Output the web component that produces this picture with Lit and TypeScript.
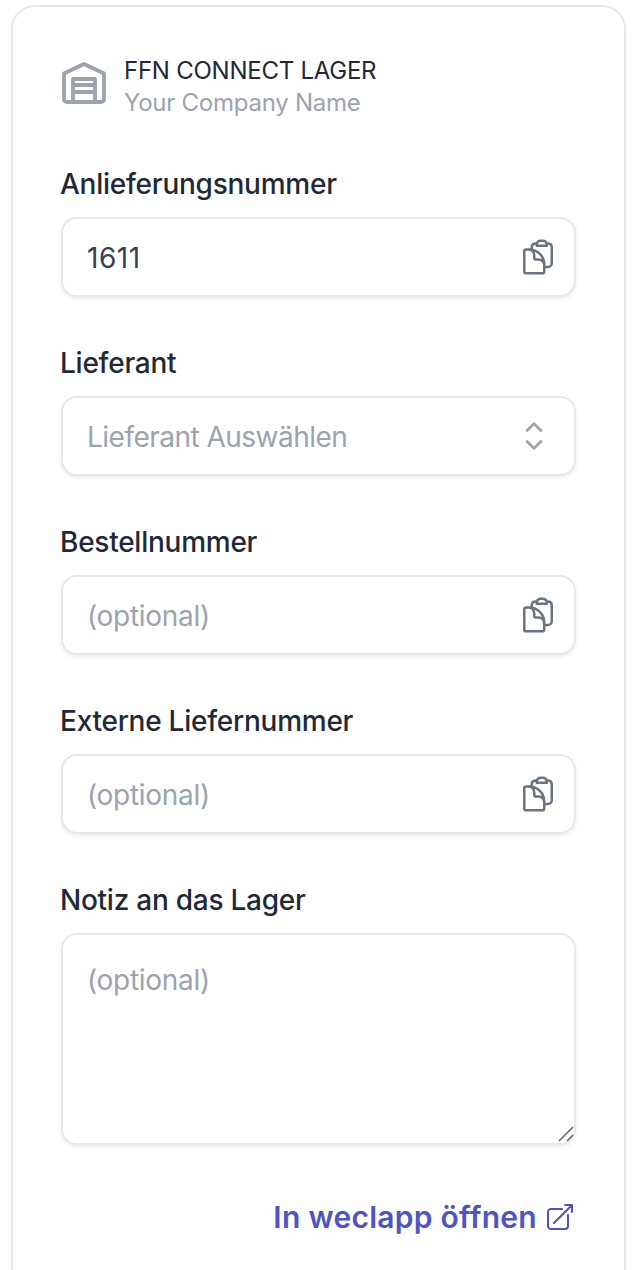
import { LitElement, html, css, svg } from "lit";
import { customElement } from "lit/decorators.js";

const clip = svg`<path d="M8.25 7.5V6.108c0-1.135.845-2.098 1.976-2.192.373-.03.748-.057 1.123-.08M15.75 18H18a2.25 2.25 0 002.25-2.25V6.108c0-1.135-.845-2.098-1.976-2.192a48.424 48.424 0 00-1.123-.08M15.75 18.75v-1.875a3.375 3.375 0 00-3.375-3.375h-1.5a1.125 1.125 0 01-1.125-1.125v-1.5A3.375 3.375 0 006.375 7.5H5.25m11.9-3.664A2.251 2.251 0 0015 2.25h-1.5a2.251 2.251 0 00-2.15 1.586m5.8 0c.065.21.1.433.1.664v.75h-6V4.5c0-.231.035-.454.1-.664M6.75 7.5H4.875c-.621 0-1.125.504-1.125 1.125v12c0 .621.504 1.125 1.125 1.125h9.75c.621 0 1.125-.504 1.125-1.125V16.5a9 9 0 00-9-9z"/>`;

@customElement("app-root")
export class AppRoot extends LitElement {
  static styles = css`
    :host { display: block; font-family: Inter, "Liberation Sans", sans-serif; height: 1270px; overflow: hidden; background: #fff; }
    * { box-sizing: border-box; }
    .page { padding: 5px 14px 0 11px; }
    .card { border: 2px solid #e5e7eb; border-radius: 24px; padding: 48px 48px 0; height: 1400px; background: #fff; box-shadow: 0 2px 4px rgba(0,0,0,.05); }
    .brand { display: flex; align-items: center; gap: 17px; height: 64px; }
    .brand svg { width: 46px; height: 46px; flex: none; color: #9ca3af; margin-top: -4px; }
    .brand-text { display: flex; flex-direction: column; font-size: 24px; line-height: 32px; letter-spacing: -.25px; }
    .title { color: #1f2937; }
    .sub { color: #9ca3af; }
    .form { display: flex; flex-direction: column; gap: 46px; margin-top: 45px; }
    .field { display: flex; flex-direction: column; gap: 13px; }
    label { display: block; font-size: 28px; line-height: 40px; font-weight: 500; color: #1f2937; height: 40px; margin-left: -1px; letter-spacing: -.25px; }
    .box { display: flex; align-items: center; height: 80px; padding: 2px 16px 0 24px; border: 2px solid #e5e7eb; border-radius: 16px; background: #fff; box-shadow: 0 2px 4px rgba(0,0,0,.08); }
    input { flex: 1; min-width: 0; border: 0; outline: 0; padding: 0; font: inherit; font-size: 28px; letter-spacing: .5px; color: #374151; background: transparent; }
    input::placeholder, textarea::placeholder { color: #9ca3af; opacity: 1; letter-spacing: -.3px; }
    .placeholder { flex: 1; font-size: 28px; letter-spacing: -.52px; color: #9ca3af; }
    .clip { width: 40px; height: 40px; color: #6b7280; flex: none; margin-top: -2px; }
    .updown { width: 44px; height: 44px; color: #9ca3af; flex: none; margin-right: 2px; margin-top: -2px; }
    .area { position: relative; }
    textarea { display: block; width: 100%; height: 212px; padding: 25px 24px; border: 2px solid #e5e7eb; border-radius: 16px; font: inherit; font-size: 28px; line-height: 40px; color: #374151; outline: 0; resize: none; box-shadow: 0 2px 4px rgba(0,0,0,.08); }
    .grip { position: absolute; right: 1px; bottom: 2px; width: 18px; height: 18px; stroke: #6b6b6b; stroke-width: 1.6; fill: none; }
    .foot { display: flex; justify-content: flex-end; margin-top: 50px; }
    a { display: inline-flex; align-items: center; gap: 7px; font-size: 30px; line-height: 44px; font-weight: 600; color: #4f54c4; text-decoration: none; letter-spacing: .27px; }
    a svg { width: 32px; height: 32px; }
    svg.o { fill: none; stroke: currentColor; stroke-width: 1.5; stroke-linecap: round; stroke-linejoin: round; }
  `;

  private clipIcon() {
    return html`<svg class="o clip" viewBox="0 0 24 24">${clip}</svg>`;
  }

  private textField(label: string, value: string, placeholder: string) {
    return html`<div class="field"><label>${label}</label>
      <div class="box"><input .value=${value} placeholder=${placeholder} />${this.clipIcon()}</div></div>`;
  }

  render() {
    return html`<div class="page"><div class="card">
      <div class="brand">
        <svg viewBox="0 0 46 46" fill="none" stroke="currentColor" stroke-width="3.8" stroke-linejoin="round">
          <path d="M3 11.500 23 2l20 9.500V37a3 3 0 0 1-3 3H6a3 3 0 0 1-3-3z"/>
          <path d="M12 40V17h22v23M12 23h22M12 30h22"/>
        </svg>
        <div class="brand-text"><span class="title">FFN CONNECT LAGER</span><span class="sub">Your Company Name</span></div>
      </div>
      <div class="form">
        ${this.textField("Anlieferungsnummer", "1611", "")}
        <div class="field"><label>Lieferant</label>
          <div class="box"><span class="placeholder">Lieferant Auswählen</span>
            <svg class="o updown" viewBox="0 0 24 24"><path d="M8.250 15 12 18.750 15.750 15m-7.500-6L12 5.250 15.750 9"/></svg></div></div>
        ${this.textField("Bestellnummer", "", "(optional)")}
        ${this.textField("Externe Liefernummer", "", "(optional)")}
        <div class="field"><label>Notiz an das Lager</label>
          <div class="area"><textarea placeholder="(optional)"></textarea>
            <svg class="grip" viewBox="0 0 18 18"><path d="M2 16 16 2M10 16l6-6"/></svg></div></div>
      </div>
      <div class="foot"><a href="#">In weclapp öffnen
        <svg class="o" viewBox="0 0 24 24"><path d="M13.500 6H5.250A2.250 2.250 0 0 0 3 8.250v10.500A2.250 2.250 0 0 0 5.250 21h10.500A2.250 2.250 0 0 0 18 18.750V10.500m-10.500 6L21 3m0 0h-5.250M21 3v5.250"/></svg></a></div>
    </div></div>`;
  }
}
